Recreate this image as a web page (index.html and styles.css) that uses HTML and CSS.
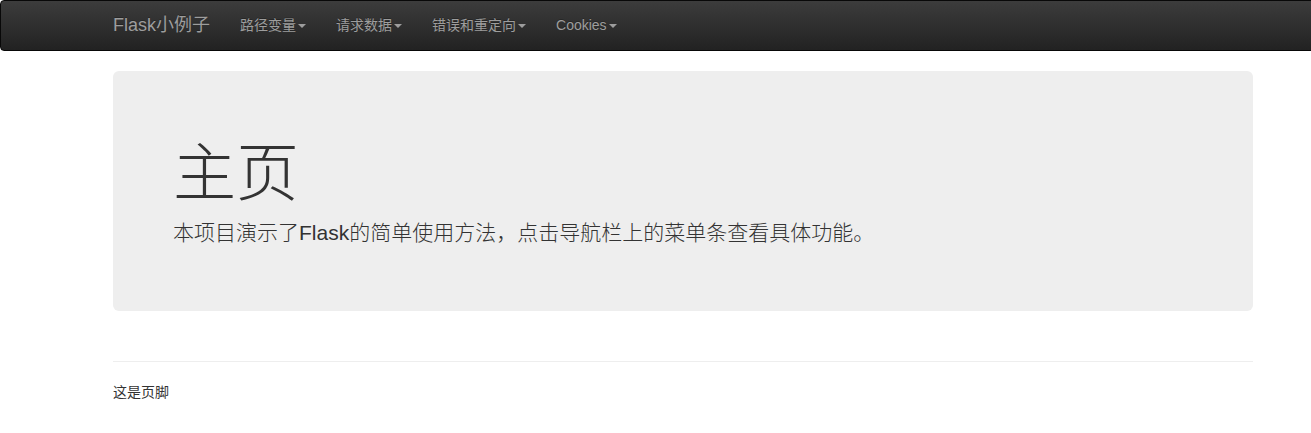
FILE: index.html
```html
<!DOCTYPE html>
<html lang="zh-CN">
<head>
<meta charset="utf-8">
<title>Flask小例子</title>
<link rel="stylesheet" href="styles.css">
</head>
<body>
<nav class="navbar">
  <div class="container nav-inner">
    <a class="brand" href="#">Flask小例子</a>
    <ul class="nav">
      <li><a href="#">路径变量<span class="caret"></span></a></li>
      <li><a href="#">请求数据<span class="caret"></span></a></li>
      <li><a href="#">错误和重定向<span class="caret"></span></a></li>
      <li><a href="#">Cookies<span class="caret"></span></a></li>
    </ul>
  </div>
</nav>
<div class="container page">
  <div class="jumbotron">
    <h1>主页</h1>
    <p>本项目演示了Flask的简单使用方法，点击导航栏上的菜单条查看具体功能。</p>
  </div>
  <hr class="rule">
  <footer class="footer">这是页脚</footer>
</div>
</body>
</html>
```
FILE: styles.css
```css
html { overflow: hidden; }
body {
  margin: 0;
  width: 1366px;
  font-family: "Liberation Sans", Arial, "Noto Sans CJK SC", sans-serif;
  font-size: 14px;
  line-height: 1.42857;
  color: #333;
  background: #fff;
}
.container {
  width: 1170px;
  margin: 0 auto;
  padding: 0 15px;
  box-sizing: border-box;
}
.page {
  display: flex;
  flex-direction: column;
}
.navbar {
  height: 51px;
  box-sizing: border-box;
  border: 1px solid #080808;
  border-radius: 4px;
  background: linear-gradient(to bottom, #3c3c3c 0, #222 100%);
  margin-bottom: 20px;
}
.nav-inner {
  display: flex;
  align-items: stretch;
  height: 49px;
}
.brand {
  margin-left: -15px;
  padding: 0 15px;
  font-size: 18px;
  line-height: 49px;
  color: #9d9d9d;
  text-decoration: none;
  text-shadow: 0 -1px 0 rgba(0,0,0,.25);
}
.nav {
  display: flex;
  list-style: none;
  margin: 0;
  padding: 0;
}
.nav a {
  display: block;
  padding: 0 15px;
  line-height: 49px;
  color: #9d9d9d;
  text-decoration: none;
  text-shadow: 0 -1px 0 rgba(0,0,0,.25);
}
.caret {
  display: inline-block;
  width: 0;
  height: 0;
  margin-left: 2px;
  vertical-align: middle;
  border-top: 4px solid;
  border-left: 4px solid transparent;
  border-right: 4px solid transparent;
}
.jumbotron {
  background: #eee;
  border-radius: 6px;
  padding: 48px 60px;
  margin-bottom: 30px;
}
.jumbotron h1 {
  margin: 20px 0 10px;
  font-size: 63px;
  line-height: 1.1;
  font-weight: 300;
  color: #333;
}
.jumbotron p {
  margin: 0 0 15px;
  font-size: 21px;
  font-weight: 200;
  line-height: 30px;
}
.rule {
  width: 100%;
  margin: 20px 0;
  border: 0;
  border-top: 1px solid #eee;
}
.footer {
  font-size: 14px;
  line-height: 20px;
  color: #333;
}
```
